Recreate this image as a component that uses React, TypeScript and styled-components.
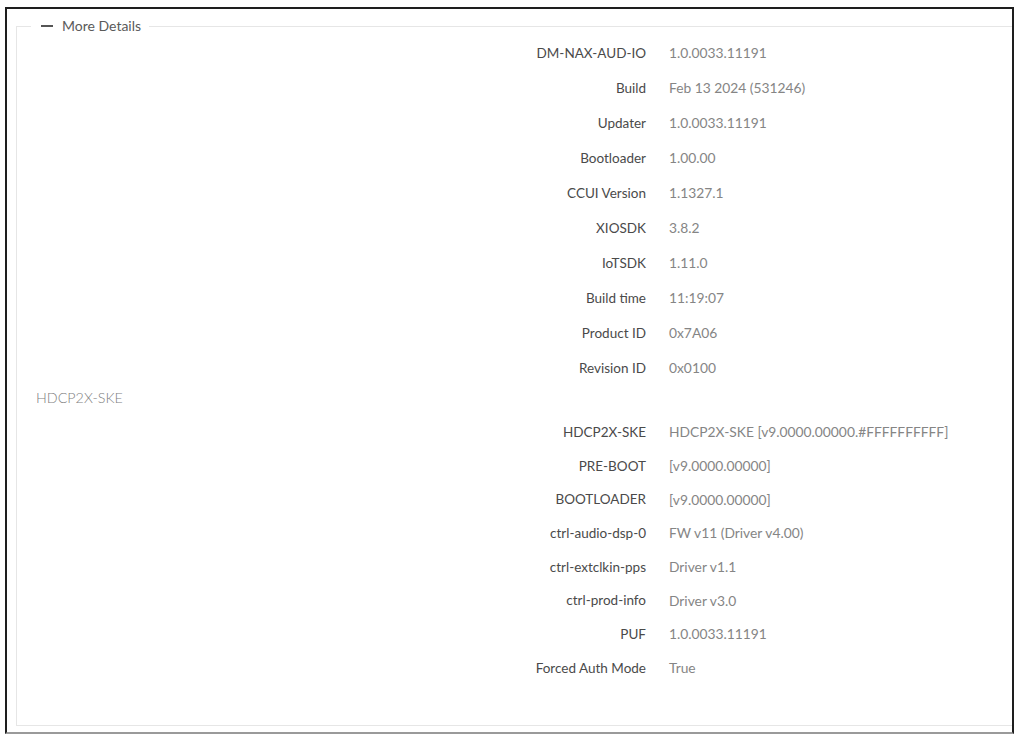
import React from "react";
import styled, { createGlobalStyle } from "styled-components";

const Global = createGlobalStyle`
  html, body { margin: 0; padding: 0; background: #ffffff; }
  body { font-family: Lato, "Open Sans", sans-serif; }
`;

const Frame = styled.div`
  box-sizing: border-box;
  margin: 7px 0 0 5px;
  width: 1009px;
  height: 727px;
  border: 2px solid #1e1e1e;
  border-bottom: 2px solid #9a9a9a;
  padding: 10px 0 0 9px;
  overflow: hidden;
  background: #fff;
`;

const Fieldset = styled.fieldset`
  box-sizing: border-box;
  margin: 0;
  width: 1000px;
  height: 707px;
  border: 1px solid #e6e6e6;
  border-right: none;
  padding: 0;
`;

const Legend = styled.legend`
  margin-left: 14px;
  padding: 0 8px 0 10px;
  display: flex;
  align-items: center;
  gap: 9px;
  font-size: 14px;
  color: #5a5a5a;
  line-height: 14px;
`;

const Dash = styled.span`
  display: inline-block;
  width: 12px;
  height: 2px;
  background: #555;
`;

const Section = styled.div<{ $top: number }>`
  display: flex;
  flex-direction: column;
  padding-top: ${(p) => p.$top}px;
`;

const Row = styled.div<{ $h: number }>`
  display: grid;
  grid-template-columns: 629px 1fr;
  column-gap: 23px;
  align-items: center;
  height: ${(p) => p.$h}px;
`;

const Label = styled.span`
  text-align: right;
  font-size: 13.5px;
  color: #4a4a4a;
  white-space: nowrap;
`;

const Value = styled.span`
  font-size: 13.8px;
  color: #858585;
  white-space: nowrap;
`;

const GroupTitle = styled.div`
  padding-left: 19px;
  height: 24px;
  display: flex;
  align-items: center;
  font-size: 14.3px;
  font-weight: 300;
  color: #808080;
`;

const main: [string, string][] = [
  ["DM-NAX-AUD-IO", "1.0.0033.11191"],
  ["Build", "Feb 13 2024 (531246)"],
  ["Updater", "1.0.0033.11191"],
  ["Bootloader", "1.00.00"],
  ["CCUI Version", "1.1327.1"],
  ["XIOSDK", "3.8.2"],
  ["IoTSDK", "1.11.0"],
  ["Build time", "11:19:07"],
  ["Product ID", "0x7A06"],
  ["Revision ID", "0x0100"],
];

const hdcp: [string, string][] = [
  ["HDCP2X-SKE", "HDCP2X-SKE [v9.0000.00000.#FFFFFFFFFF]"],
  ["PRE-BOOT", "[v9.0000.00000]"],
  ["BOOTLOADER", "[v9.0000.00000]"],
  ["ctrl-audio-dsp-0", "FW v11 (Driver v4.00)"],
  ["ctrl-extclkin-pps", "Driver v1.1"],
  ["ctrl-prod-info", "Driver v3.0"],
  ["PUF", "1.0.0033.11191"],
  ["Forced Auth Mode", "True"],
];

export default function App() {
  return (
    <>
      <Global />
      <Frame>
        <Fieldset>
          <Legend>
            <Dash />
            More Details
          </Legend>
          <Section $top={2}>
            {main.map(([l, v]) => (
              <Row key={l} $h={35}>
                <Label>{l}</Label>
                <Value>{v}</Value>
              </Row>
            ))}
          </Section>
          <GroupTitle>HDCP2X-SKE</GroupTitle>
          <Section $top={6}>
            {hdcp.map(([l, v]) => (
              <Row key={l} $h={33.7}>
                <Label>{l}</Label>
                <Value>{v}</Value>
              </Row>
            ))}
          </Section>
        </Fieldset>
      </Frame>
    </>
  );
}
